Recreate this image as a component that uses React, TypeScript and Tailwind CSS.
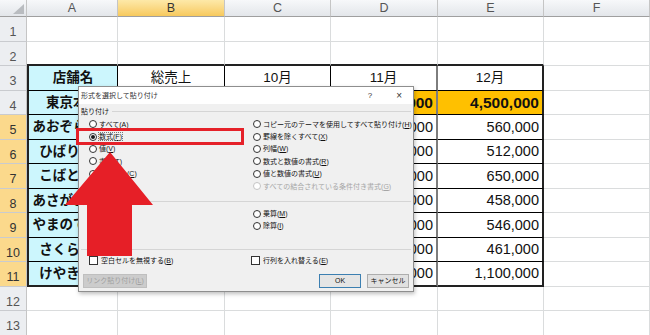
import React from 'react';

const cols = ['A', 'B', 'C', 'D', 'E', 'F'];

// B/C of rows 4-11 sit under the dialog, so they stay empty
const table: Record<number, string[]> = {
  3: ['店舗名', '総売上', '10月', '11月', '12月'],
  4: ['東京本店', '', '', '4,400,000', '4,500,000'],
  5: ['あおぞら支店', '', '', '530,000', '560,000'],
  6: ['ひばり支店', '', '', '490,000', '512,000'],
  7: ['こばと支店', '', '', '610,000', '650,000'],
  8: ['あさがお支店', '', '', '450,000', '458,000'],
  9: ['やまのて支店', '', '', '520,000', '546,000'],
  10: ['さくら支店', '', '', '450,000', '461,000'],
  11: ['けやき支店', '', '', '1,100,000', '1,100,000'],
};

function Mn({ text }: { text: string }) {
  const i = text.lastIndexOf('(');
  if (i < 0) return <>{text}</>;
  return (
    <>
      {text.slice(0, i)}(<span className="underline">{text.slice(i + 1, -1)}</span>)
    </>
  );
}

function Radio({ label, checked, disabled, focus }: { label: string; checked?: boolean; disabled?: boolean; focus?: boolean }) {
  if (!label) return <div className="h-[12.4px]" />;
  return (
    <div className="flex h-[12.4px] items-center">
      <span
        className={`flex h-[8px] w-[8px] shrink-0 items-center justify-center rounded-full border bg-white ${
          disabled ? 'border-[#c4c4c4]' : 'border-[#333]'
        }`}
      >
        {checked && <span className="h-[4px] w-[4px] rounded-full bg-[#1a1a1a]" />}
      </span>
      <span
        className={`ml-[2px] whitespace-nowrap leading-none ${disabled ? 'text-[#a6a6a6]' : 'text-[#111]'} ${
          focus ? 'outline-1 outline-dotted outline-[#777]' : ''
        }`}
      >
        <Mn text={label} />
      </span>
    </div>
  );
}

function Check({ label }: { label: string }) {
  return (
    <div className="flex items-center">
      <span className="h-[9px] w-[9px] shrink-0 border border-[#333] bg-white" />
      <span className="ml-[3px] whitespace-nowrap leading-none text-[#111]">
        <Mn text={label} />
      </span>
    </div>
  );
}

function Dialog() {
  const left = ['すべて(A)', '数式(F)', '値(V)', '書式(T)', 'コメント(C)', '入力規則(N)'];
  const right = [
    'コピー元のテーマを使用してすべて貼り付け(H)',
    '罫線を除くすべて(X)',
    '列幅(W)',
    '数式と数値の書式(R)',
    '値と数値の書式(U)',
    'すべての結合されている条件付き書式(G)',
  ];
  const opsL = ['しない(O)', '加算(D)', '減算(S)'];
  const opsR = ['乗算(M)', '除算(I)', ''];
  return (
    <div className="absolute left-[78px] top-[86px] flex h-[206px] w-[336px] flex-col border border-[#8e8e8e] bg-[#f0f0f0] text-[7px] shadow-[1px_2px_4px_rgba(0,0,0,0.25)] font-['Liberation_Sans','Noto_Sans_CJK_JP',sans-serif]">
      <div className="flex h-[17px] shrink-0 items-center justify-between bg-white pl-[2px] pr-[11px] text-[#333]">
        <span className="leading-none">形式を選択して貼り付け</span>
        <span className="flex items-center text-[8px] leading-none text-[#333]">
          <span>?</span>
          <span className="ml-[24px] text-[10px]">×</span>
        </span>
      </div>
      <div className="flex flex-1 flex-col px-[2px] pt-[1px]">
        <div className="flex h-[13px] items-center">
          <span className="leading-none text-[#111]">貼り付け</span>
          <span className="ml-[3px] h-px flex-1 bg-[#d5d5d5]" />
        </div>
        <div className="grid grid-cols-[164px_1fr] pl-[8px]">
          <div className="flex flex-col">
            {left.map((l, i) => (
              <Radio key={l} label={l} checked={i === 1} focus={i === 1} />
            ))}
          </div>
          <div className="flex flex-col">
            {right.map((l, i) => (
              <Radio key={l} label={l} disabled={i === 5} />
            ))}
          </div>
        </div>
        <div className="mt-[3px] flex h-[12px] items-center">
          <span className="leading-none text-[#111]">演算</span>
          <span className="ml-[3px] h-px flex-1 bg-[#d5d5d5]" />
        </div>
        <div className="grid grid-cols-[164px_1fr] pl-[8px]">
          <div className="flex flex-col">
            {opsL.map((l) => (
              <Radio key={l} label={l} checked={l === 'しない(O)'} />
            ))}
          </div>
          <div className="flex flex-col">
            {opsR.map((l, i) => (
              <Radio key={i} label={l} />
            ))}
          </div>
        </div>
        <div className="mt-[4px] h-px bg-[#d5d5d5]" />
        <div className="mt-[5px] grid h-[11px] grid-cols-[162px_1fr] items-center pl-[8px]">
          <Check label="空白セルを無視する(B)" />
          <Check label="行列を入れ替える(E)" />
        </div>
        <div className="mt-[8px] flex items-center pl-[2px] pr-[2px]">
          <div className="flex h-[14px] w-[64px] items-center justify-center border border-[#bfbfbf] bg-[#cccccc] leading-none text-[#a0a0a0]">
            <Mn text="リンク貼り付け(L)" />
          </div>
          <div className="ml-auto flex h-[14px] w-[42px] items-center justify-center border border-[#3c7fb1] bg-[#e5e5e5] leading-none text-[#111]">
            OK
          </div>
          <div className="ml-[6px] flex h-[14px] w-[42px] items-center justify-center border border-[#adadad] bg-[#e1e1e1] leading-none text-[#111]">
            キャンセル
          </div>
        </div>
      </div>
    </div>
  );
}

function cellClass(r: number, c: number) {
  const inTable = r >= 3 && r <= 11 && c >= 1 && c <= 5;
  let right = 'border-r border-r-[#dadcdd]';
  let bottom = 'border-b border-b-[#dadcdd]';
  let bg = 'bg-white';
  if (inTable) {
    right = c === 5 ? 'border-r-2 border-r-[#222]' : c === 4 ? 'border-r-2 border-r-[#7d7d7d]' : 'border-r border-r-black';
    bottom = r === 11 ? 'border-b-2 border-b-[#222]' : 'border-b border-b-black';
    if (c === 1) bg = 'bg-[#ccf6fd]';
    else if (r === 4) bg = 'bg-[#ffc000]';
  }
  if (r === 2 && c >= 1 && c <= 5) bottom = 'border-b-2 border-b-[#222]';
  const left = inTable && c === 1 ? 'border-l-2 border-l-[#222]' : '';
  return `${right} ${bottom} ${left} ${bg}`;
}

export default function App() {
  const cells: React.ReactNode[] = [];
  cells.push(
    <div
      key="corner"
      className="flex items-end justify-end border-r border-b border-r-[#c5c5c5] border-b-[#9f9f9f] bg-gradient-to-b from-[#f7f8fa] to-[#e3e6ea] pb-[2px] pr-[2px]"
    >
      <svg width="11" height="10" viewBox="0 0 11 10">
        <polygon points="11,0 11,10 0,10" fill="#b9bcc0" />
      </svg>
    </div>
  );
  cols.forEach((l) =>
    cells.push(
      <div
        key={l}
        className={`flex items-center justify-center border-r border-b border-r-[#c5c5c5] border-b-[#9f9f9f] text-[12.5px] leading-none ${
          l === 'B'
            ? 'bg-gradient-to-b from-[#fde9a8] to-[#f7c95c] text-[#333]'
            : 'bg-gradient-to-b from-[#f7f8fa] to-[#e3e6ea] text-[#555]'
        }`}
      >
        {l}
      </div>
    )
  );
  for (let r = 1; r <= 13; r++) {
    const hl = r >= 5 && r <= 11;
    cells.push(
      <div
        key={`h${r}`}
        className={`flex items-end justify-center border-r border-b border-r-[#c5c5c5] border-b-[#c9cbcf] pb-[2px] text-[12.5px] leading-none ${
          hl ? 'bg-[#fbd98c] text-[#333]' : 'bg-[#eceef1] text-[#555]'
        }`}
      >
        {r}
      </div>
    );
    for (let c = 1; c <= 6; c++) {
      const v = table[r]?.[c - 1] ?? '';
      const header = r === 3;
      const name = c === 1;
      const align = header || name ? 'justify-center' : 'justify-end pr-[3px]';
      const weight = name || r === 4 ? 'font-bold' : 'font-normal';
      const size = name || header ? 'text-[13.5px]' : r === 4 ? 'text-[15.5px]' : 'text-[14.5px]';
      cells.push(
        <div
          key={`${r}-${c}`}
          className={`flex items-center overflow-hidden whitespace-nowrap leading-none text-[#111] ${align} ${weight} ${size} ${cellClass(r, c)}`}
        >
          {v}
        </div>
      );
    }
  }

  return (
    <div className="relative h-[335px] w-[650px] overflow-hidden bg-white font-['Liberation_Sans','Noto_Sans_CJK_JP',sans-serif]">
      <div className="grid grid-cols-[27px_91px_107px_106px_107px_106px_106px] grid-rows-[17px_repeat(13,24.5px)]">
        {cells}
      </div>
      <Dialog />
      <div className="absolute left-[76px] top-[128px] h-[17px] w-[168px] border-[3px] border-[#e52129]" />
      <svg className="absolute left-[65px] top-[152px]" width="88" height="104" viewBox="0 0 88 104">
        <polygon points="45,0 88,53 67,53 67,104 22,104 22,53 0,53" fill="#e61f27" />
      </svg>
    </div>
  );
}
